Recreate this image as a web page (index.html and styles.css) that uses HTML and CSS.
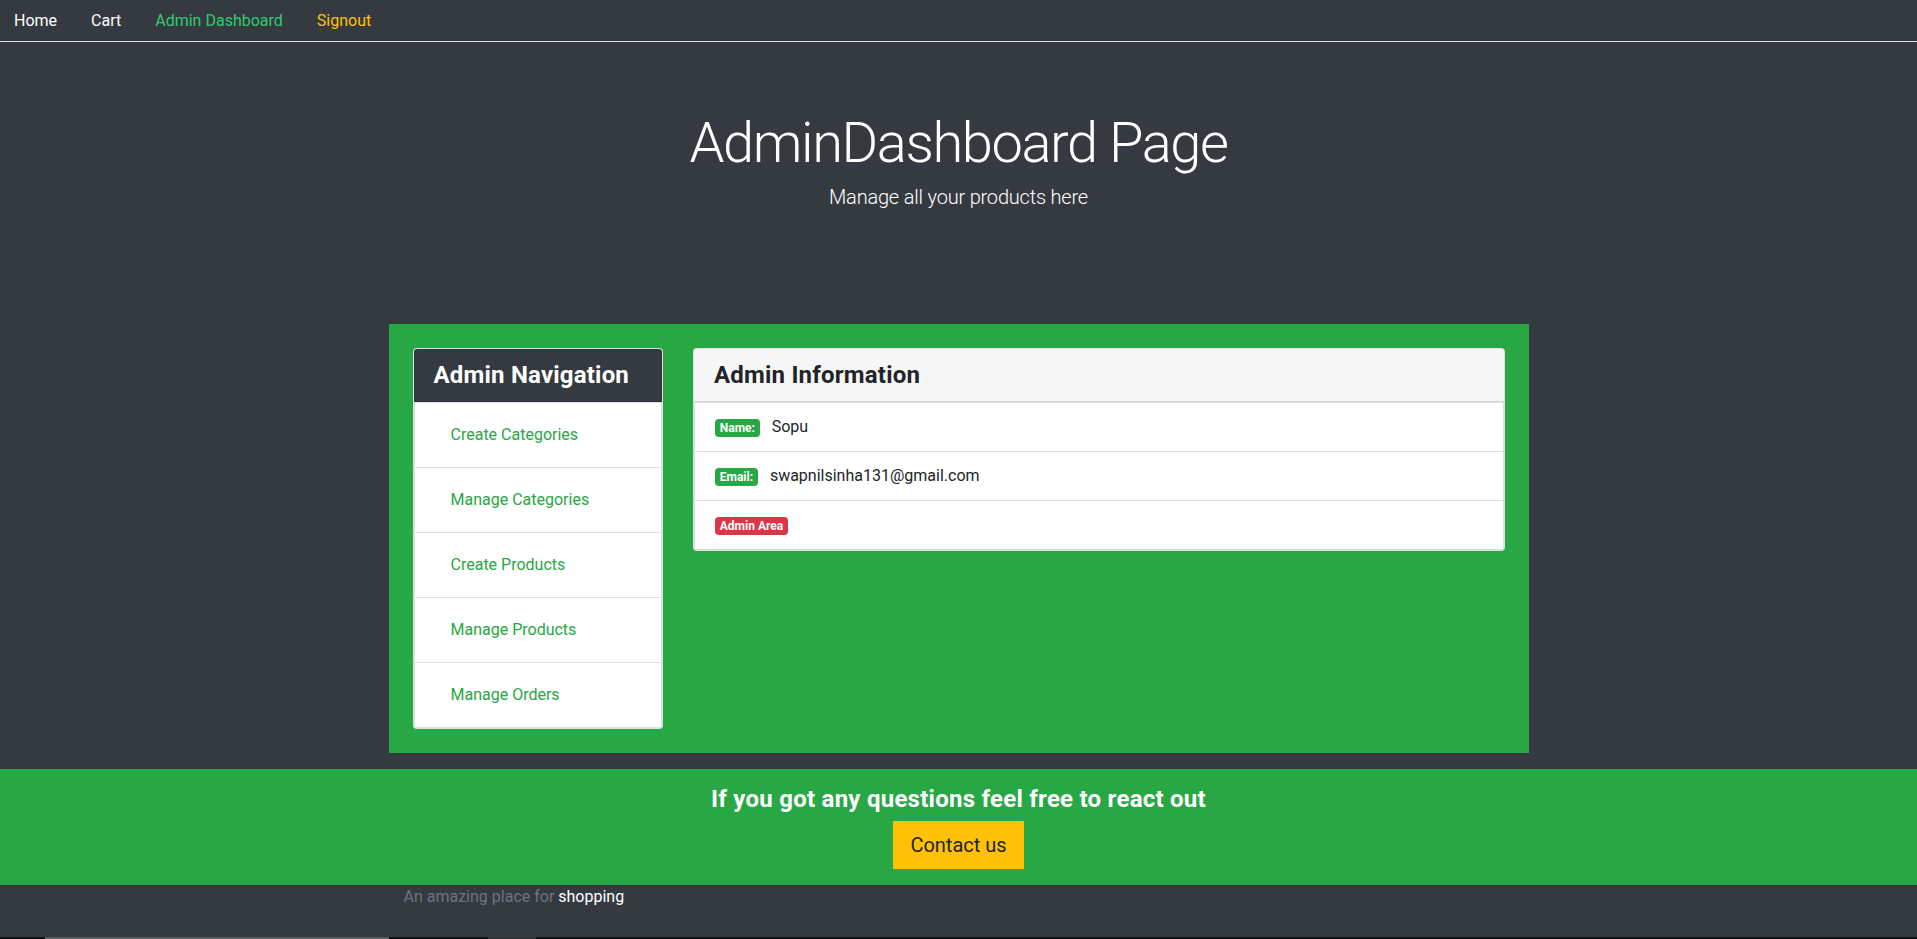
FILE: index.html
```html
<!DOCTYPE html>
<html lang="en">
<head>
<meta charset="utf-8">
<title>AdminDashboard Page</title>
<link rel="stylesheet" href="styles.css">
</head>
<body>
<nav class="topnav">
  <ul class="tabs">
    <li><a class="tab tab-white" href="#">Home</a></li>
    <li><a class="tab tab-white" href="#">Cart</a></li>
    <li><a class="tab tab-active" href="#">Admin Dashboard</a></li>
    <li><a class="tab tab-warning" href="#">Signout</a></li>
  </ul>
</nav>
<header class="hero">
  <h1 class="hero-title">AdminDashboard Page</h1>
  <p class="hero-lead">Manage all your products here</p>
</header>
<main class="panel">
  <aside class="card">
    <h4 class="card-header card-header-dark">Admin Navigation</h4>
    <ul class="list">
      <li class="list-item"><a class="list-link" href="#">Create Categories</a></li>
      <li class="list-item"><a class="list-link" href="#">Manage Categories</a></li>
      <li class="list-item"><a class="list-link" href="#">Create Products</a></li>
      <li class="list-item"><a class="list-link" href="#">Manage Products</a></li>
      <li class="list-item"><a class="list-link" href="#">Manage Orders</a></li>
    </ul>
  </aside>
  <section class="card">
    <h4 class="card-header card-header-light">Admin Information</h4>
    <ul class="list">
      <li class="list-item"><span class="badge badge-success">Name:</span> Sopu</li>
      <li class="list-item"><span class="badge badge-success">Email:</span> swapnilsinha131@gmail.com</li>
      <li class="list-item"><span class="badge badge-danger">Admin Area</span></li>
    </ul>
  </section>
</main>
<footer class="footer">
  <h4 class="footer-title">If you got any questions feel free to react out</h4>
  <button class="footer-btn" type="button">Contact us</button>
</footer>
<div class="footer-note"><span class="muted">An amazing place for </span><span class="bright">shopping</span></div>
<div class="bottom-strip"><span class="seg seg-a"></span><span class="seg seg-b"></span></div>
</body>
</html>
```
FILE: styles.css
```css
* { box-sizing: border-box; }

body {
  margin: 0;
  min-height: 100vh;
  display: flex;
  flex-direction: column;
  background: #343a40;
  color: #212529;
  font-family: Roboto, "Liberation Sans", sans-serif;
  font-size: 16px;
  line-height: 1.5;
}

/* top navigation */
.topnav { border-bottom: 1px solid #dee2e6; }
.tabs {
  display: flex;
  list-style: none;
  margin: 0 0 0 -3px;
  padding: 0;
}
.tab {
  display: block;
  padding: 8px 16px;
  border: 1px solid transparent;
  text-decoration: none;
  margin-bottom: -1px;
}
.tab-white { color: #ffffff; }
.tab-active { color: #2ecc72; }
.tab-warning { color: #ffc107; }

/* hero */
.hero {
  padding: 64px 32px;
  margin-bottom: 32px;
  text-align: center;
  color: #fff;
}
.hero-title {
  margin: 0 0 4px;
  padding-top: 4px;
  font-size: 56px;
  font-weight: 300;
  line-height: 1.2;
  letter-spacing: -1.4px;
}
.hero-lead {
  margin: 0 0 16px;
  padding-top: 1px;
  font-size: 20px;
  font-weight: 300;
  letter-spacing: -0.2px;
}

/* green panel */
.panel {
  width: 1140px;
  margin: 0 auto 16px;
  padding: 24px;
  background: #28a745;
  display: grid;
  grid-template-columns: 250.5px 1fr;
  column-gap: 30px;
  align-items: start;
}

.card {
  background: #fff;
  border: 1px solid rgba(0, 0, 0, 0.125);
  border-radius: 4px;
  overflow: hidden;
}
.card-header {
  margin: 0;
  padding: 12px 20px;
  font-size: 24px;
  font-weight: 700;
  line-height: 28px;
  letter-spacing: 0.2px;
  border-bottom: 1px solid rgba(0, 0, 0, 0.125);
}
.card-header-dark { background: #343a40; color: #fff; }
.card-header-light { background: #f7f7f7; color: #212529; }

.list { list-style: none; margin: 0; padding: 0; }
.list-item {
  padding: 12px 20px;
  border: 1px solid rgba(0, 0, 0, 0.125);
  margin-bottom: -1px;
  background: #fff;
}
.list-item:last-child { margin-bottom: 0; }
.list-link {
  display: block;
  padding: 8px 16px;
  color: #28a745;
  text-decoration: none;
}

.badge {
  display: inline-block;
  padding: 3px 4.8px;
  margin-right: 8px;
  font-size: 12px;
  font-weight: 700;
  line-height: 1;
  color: #fff;
  border-radius: 4px;
  vertical-align: baseline;
}
.badge-success { background: #28a745; }
.badge-danger { background: #dc3545; }

/* footer */
.footer {
  background: #28a745;
  color: #fff;
  text-align: center;
  padding: 16px 0;
}
.footer-title {
  margin: 0 0 8px;
  font-size: 24px;
  font-weight: 700;
  line-height: 28px;
  letter-spacing: 0.25px;
}
.footer-btn {
  font-family: inherit;
  font-size: 20px;
  line-height: 1.5;
  padding: 8px 16px;
  color: #212529;
  background: #ffc107;
  border: 1px solid #ffc107;
  border-radius: 0;
}
.footer-note {
  width: 1140px;
  margin: 0 auto;
  padding: 0 15px;
}
.muted { color: #6c757d; }
.bright { color: #fff; }

.bottom-strip {
  margin-top: auto;
  height: 2px;
  background: #0f1011;
  display: flex;
}
.seg { display: block; height: 2px; }
.seg-a { margin-left: 45px; width: 344px; background: #5b5d5f; }
.seg-b { margin-left: 99px; width: 48px; background: #303234; }
```
